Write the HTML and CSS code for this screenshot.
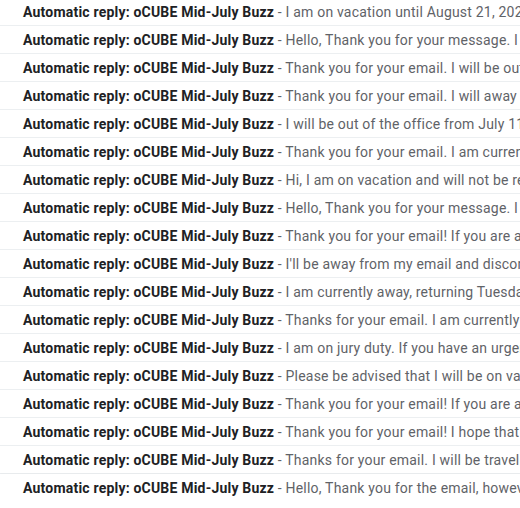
FILE: index.html
```html
<!DOCTYPE html>
<html>
<head>
<meta charset="utf-8">
<link rel="stylesheet" href="styles.css">
</head>
<body>
<div class="list">
  <div class="row"><span class="subj">Automatic reply: oCUBE Mid-July Buzz</span><span class="snip"> - I am on vacation until August 21, 2023</span></div>
  <div class="row"><span class="subj">Automatic reply: oCUBE Mid-July Buzz</span><span class="snip"> - Hello, Thank you for your message. I am out</span></div>
  <div class="row"><span class="subj">Automatic reply: oCUBE Mid-July Buzz</span><span class="snip"> - Thank you for your email. I will be out of the office</span></div>
  <div class="row"><span class="subj">Automatic reply: oCUBE Mid-July Buzz</span><span class="snip"> - Thank you for your email. I will away from the office</span></div>
  <div class="row"><span class="subj">Automatic reply: oCUBE Mid-July Buzz</span><span class="snip"> - I will be out of the office from July 11</span></div>
  <div class="row"><span class="subj">Automatic reply: oCUBE Mid-July Buzz</span><span class="snip"> - Thank you for your email. I am currently out</span></div>
  <div class="row"><span class="subj">Automatic reply: oCUBE Mid-July Buzz</span><span class="snip"> - Hi, I am on vacation and will not be reachable</span></div>
  <div class="row"><span class="subj">Automatic reply: oCUBE Mid-July Buzz</span><span class="snip"> - Hello, Thank you for your message. I am out</span></div>
  <div class="row"><span class="subj">Automatic reply: oCUBE Mid-July Buzz</span><span class="snip"> - Thank you for your email! If you are a customer</span></div>
  <div class="row"><span class="subj">Automatic reply: oCUBE Mid-July Buzz</span><span class="snip"> - I'll be away from my email and disconnected</span></div>
  <div class="row"><span class="subj">Automatic reply: oCUBE Mid-July Buzz</span><span class="snip"> - I am currently away, returning Tuesday</span></div>
  <div class="row"><span class="subj">Automatic reply: oCUBE Mid-July Buzz</span><span class="snip"> - Thanks for your email. I am currently out</span></div>
  <div class="row"><span class="subj">Automatic reply: oCUBE Mid-July Buzz</span><span class="snip"> - I am on jury duty. If you have an urgent</span></div>
  <div class="row"><span class="subj">Automatic reply: oCUBE Mid-July Buzz</span><span class="snip"> - Please be advised that I will be on vacation</span></div>
  <div class="row"><span class="subj">Automatic reply: oCUBE Mid-July Buzz</span><span class="snip"> - Thank you for your email! If you are a customer</span></div>
  <div class="row"><span class="subj">Automatic reply: oCUBE Mid-July Buzz</span><span class="snip"> - Thank you for your email! I hope that</span></div>
  <div class="row"><span class="subj">Automatic reply: oCUBE Mid-July Buzz</span><span class="snip"> - Thanks for your email. I will be traveling</span></div>
  <div class="row last"><span class="subj">Automatic reply: oCUBE Mid-July Buzz</span><span class="snip"> - Hello, Thank you for the email, however</span></div>
</div>
</body>
</html>
```
FILE: styles.css
```css
html, body {
  margin: 0;
  padding: 0;
  background: #ffffff;
  overflow: hidden;
}
.list {
  margin-top: -2px;
  display: flex;
  flex-direction: column;
}
.row {
  height: 27px;
  border-bottom: 1px solid #eceff1;
  padding-left: 23px;
  display: flex;
  align-items: center;
  white-space: nowrap;
  overflow: hidden;
  font-family: Roboto, "Liberation Sans", sans-serif;
  font-size: 14px;
  letter-spacing: 0.2px;
}
.row.last {
  border-bottom: none;
  height: 28px;
  box-shadow: 0 1px 2px rgba(60, 64, 67, 0.3);
}
.subj {
  font-weight: 700;
  color: #202124;
}
.snip {
  color: #5f6368;
  white-space: pre;
}
```
